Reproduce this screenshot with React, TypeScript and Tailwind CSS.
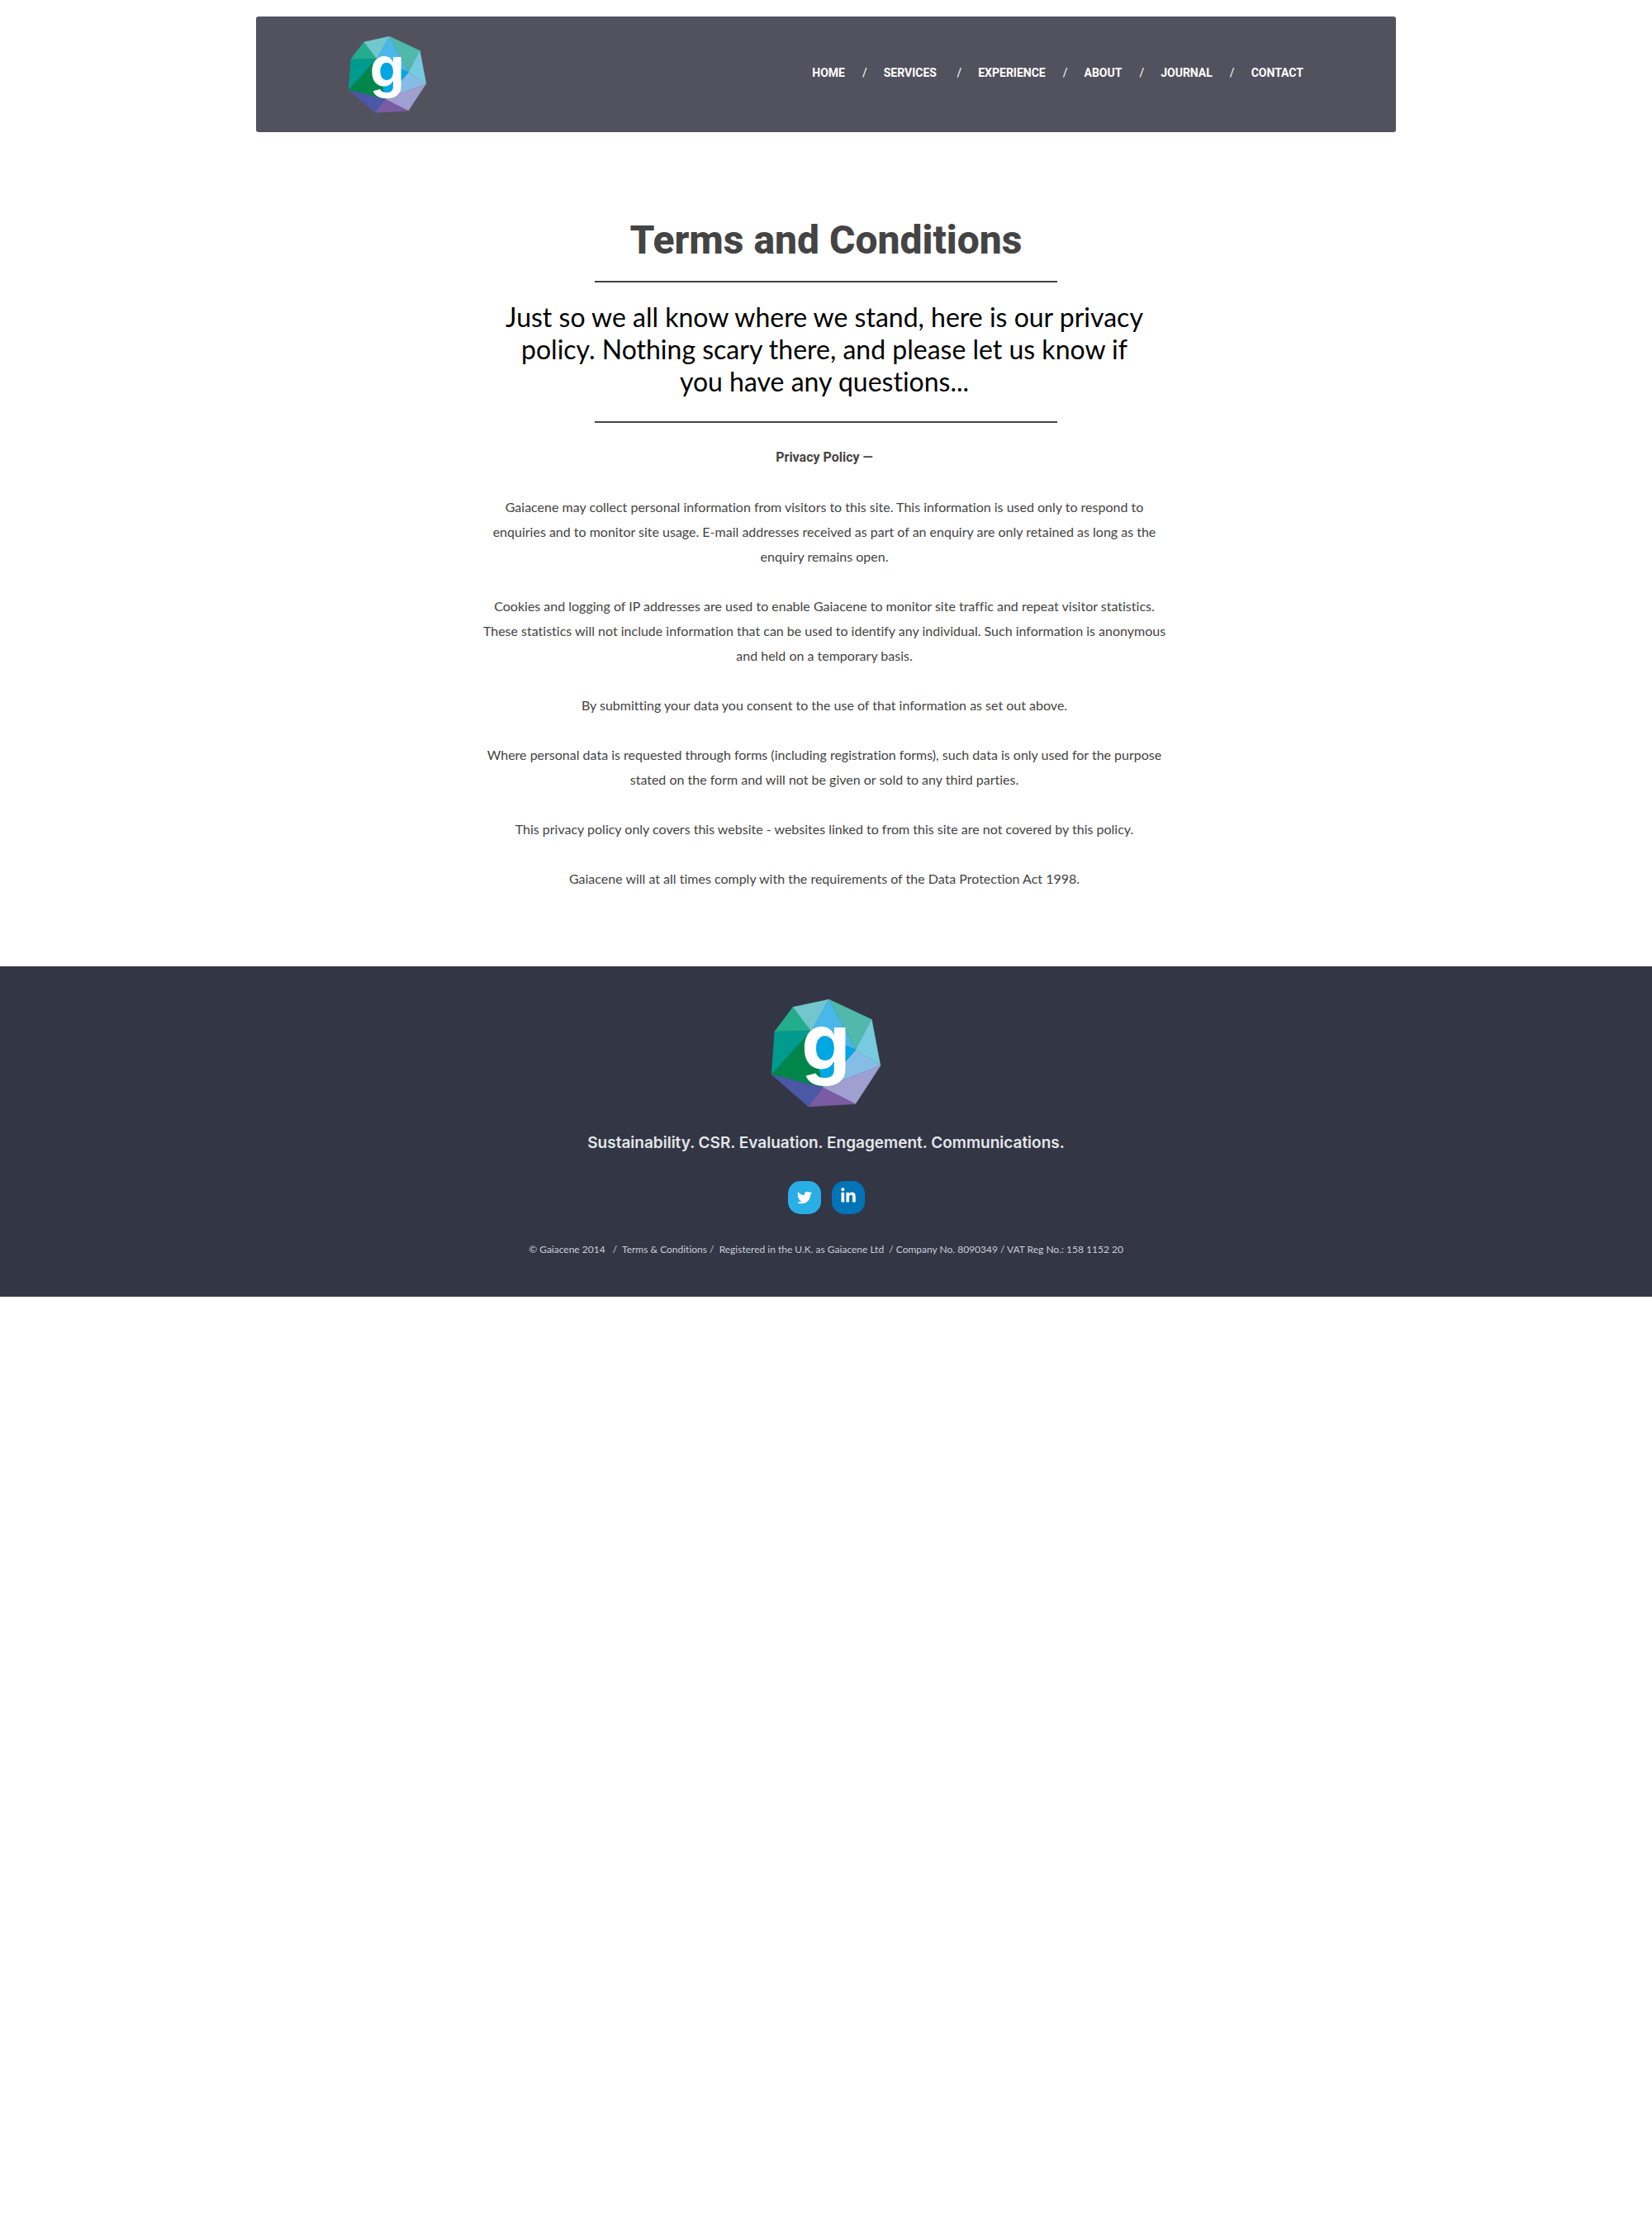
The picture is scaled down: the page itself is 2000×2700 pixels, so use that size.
import { FaLinkedinIn, FaTwitter } from "react-icons/fa";

const navItems = ["HOME", "SERVICES\u00a0", "EXPERIENCE", "ABOUT", "JOURNAL", "CONTACT"];

const paragraphs = [
  "Gaiacene may collect personal information from visitors to this site. This information is used only to respond to enquiries and to monitor site usage. E-mail addresses received as part of an enquiry are only retained as long as the enquiry remains open.",
  "Cookies and logging of IP addresses are used to enable Gaiacene to monitor site traffic and repeat visitor statistics. These statistics will not include information that can be used to identify any individual. Such information is anonymous and held on a temporary basis.",
  "By submitting your data you consent to the use of that information as set out above.",
  "Where personal data is requested through forms (including registration forms), such data is only used for the purpose stated on the form and will not be given or sold to any third parties.",
  "This privacy policy only covers this website - websites linked to from this site are not covered by this policy.",
  "Gaiacene will at all times comply with the requirements of the Data Protection Act 1998.",
];

const facets: [string, string][] = [
  ["113,267 180,178 246,265", "#24ad8c"],
  ["180,178 311,150 246,265", "#72c7cd"],
  ["311,150 408,333 246,265", "#49b7ea"],
  ["311,150 466,223 408,333", "#50b9ab"],
  ["466,223 498,391 408,333", "#77cbdf"],
  ["408,333 498,391 288,470", "#86bde7"],
  ["246,265 408,333 288,470", "#00a7e3"],
  ["113,267 246,265 102,423", "#009b8f"],
  ["246,265 288,470 102,423", "#00864b"],
  ["498,391 407,530 288,470", "#9f9fd0"],
  ["407,530 236,540 288,470", "#7b5ba4"],
  ["236,540 102,423 288,470", "#4b58a6"],
];

function Logo({ className }: { className: string }) {
  return (
    <svg viewBox="102 150 396 390" className={`overflow-visible ${className}`} role="img" aria-label="Gaiacene">
      {facets.map(([points, fill]) => (
        <polygon key={points} points={points} fill={fill} stroke={fill} strokeWidth="1" />
      ))}
      <text x="299" y="405" textAnchor="middle" fontSize="280" fill="#fff" className="font-['Inter',sans-serif] leading-none font-bold">
        g
      </text>
    </svg>
  );
}

function Rule() {
  return <hr className="h-0.5 w-full max-w-[560px] border-0 bg-[#444]" />;
}

export default function App() {
  return (
    <div className="bg-white font-['Lato',sans-serif] [font-variant-ligatures:none]">
      <div className="px-5 pt-5">
        <header className="mx-auto flex min-h-[140px] max-w-[1380px] flex-wrap items-center justify-between rounded-[3px] bg-[#52515e] px-28">
          <a href="#home">
            <Logo className="w-[94px]" />
          </a>
          <nav aria-label="Main" className="pb-1">
            <ul className="flex flex-wrap items-center gap-[21px] font-['Roboto',sans-serif] text-sm text-white">
              {navItems.map((item, i) => (
                <li key={item} className="flex gap-5">
                  {i > 0 && <span aria-hidden="true">/</span>}
                  <a href={`#${item.trim().toLowerCase()}`} className="font-bold">
                    {item}
                  </a>
                </li>
              ))}
            </ul>
          </nav>
        </header>
      </div>

      <main className="flex flex-col items-center px-5 pt-[103px] pb-[91px] text-center text-[#444]">
        <h1 className="mb-[21px] font-['Roboto',sans-serif] text-5xl leading-[56px] font-extrabold">Terms and Conditions</h1>
        <Rule />
        <p className="mt-[22px] mb-[29px] max-w-[784px] pr-1 text-[32px] leading-[39px] text-black">
          Just so we all know where we stand, here is our privacy policy. Nothing scary there, and please let us know if
          you have any questions...
        </p>
        <Rule />
        <div className="mt-[27px] flex max-w-[838px] flex-col gap-[30px] pr-1 leading-[30px]">
          <h2 className="font-['Roboto',sans-serif] font-bold">Privacy Policy —</h2>
          {paragraphs.map((text) => (
            <p key={text}>{text}</p>
          ))}
        </div>
      </main>

      <footer className="flex flex-col items-center bg-[#333644] px-5 pt-10 pb-[47px] text-center text-[#e3e6eb]">
        <Logo className="w-[132px]" />
        <p className="mt-[29px] font-['Inter',sans-serif] text-[19px] leading-[30px] font-semibold">
          Sustainability. CSR. Evaluation. Engagement. Communications.
        </p>
        <div className="mt-[31px] flex gap-[13px] text-white">
          <a href="#twitter" aria-label="Twitter" className="flex size-10 items-center justify-center rounded-[15px] bg-[#29aee6]">
            <FaTwitter className="size-[18px]" />
          </a>
          <a href="#linkedin" aria-label="LinkedIn" className="flex size-10 items-center justify-center rounded-[15px] bg-[#0074b7] pb-1">
            <FaLinkedinIn className="size-5" />
          </a>
        </div>
        <p className="mt-[33px] text-xs leading-5 whitespace-pre-wrap text-[#cccddb]">
          {"© Gaiacene 2014   /  "}
          <a href="#terms">{"Terms & Conditions"}</a>
          {" /  Registered in the U.K. as Gaiacene Ltd  / Company No. 8090349 / VAT Reg No.: 158 1152 20"}
        </p>
      </footer>
    </div>
  );
}
